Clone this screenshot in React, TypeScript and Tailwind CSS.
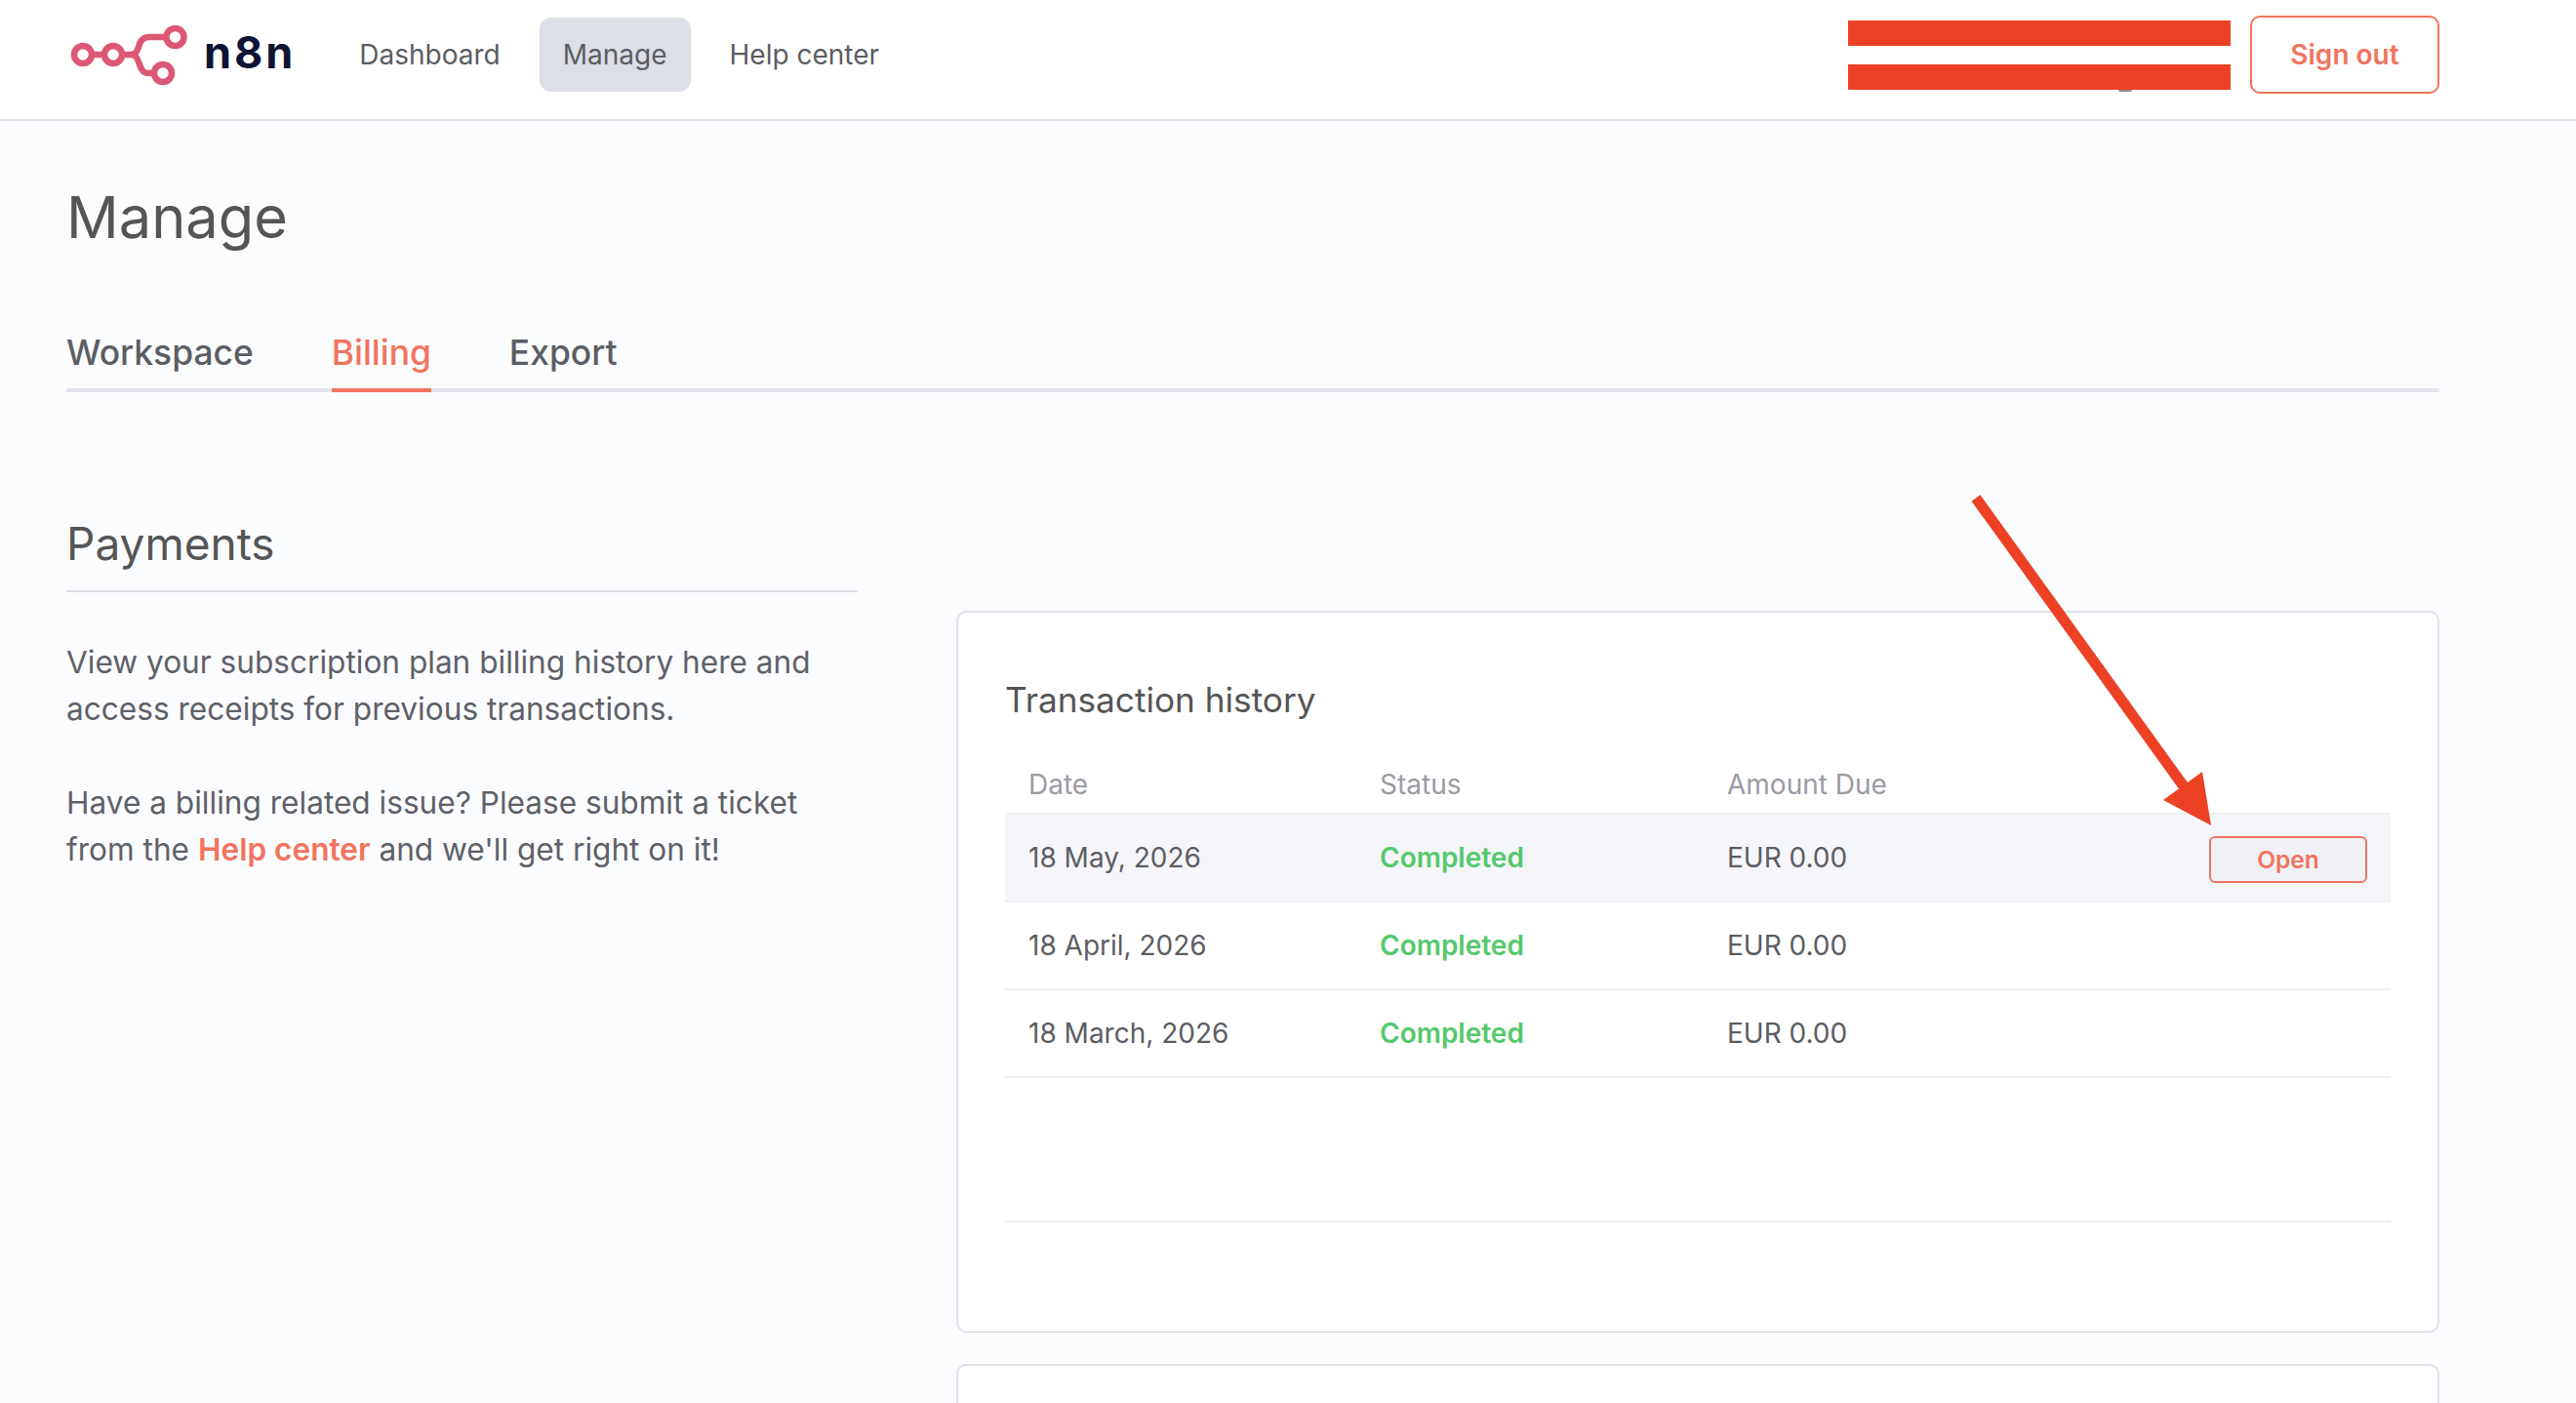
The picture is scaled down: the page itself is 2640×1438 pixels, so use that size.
import React from "react";

const rows = [
  { date: "18 May, 2026", amount: "EUR 0.00", open: true },
  { date: "18 April, 2026", amount: "EUR 0.00", open: false },
  { date: "18 March, 2026", amount: "EUR 0.00", open: false },
];

const Logo = () => (
  <svg width="126" height="70" viewBox="18 10 126 70" fill="none" stroke="#dc5874" strokeWidth="6.5">
    <circle cx="35" cy="45" r="9" />
    <circle cx="66" cy="45" r="9" />
    <circle cx="129.5" cy="27" r="9" />
    <circle cx="117" cy="64" r="9" />
    <path d="M44 45H57" />
    <path d="M75 45H84C90 45 91 40 93 34C95 29 98 27 103 27H120" />
    <path d="M84 45C90 45 91 50 93 55C95 62 98 64 103 64H108" />
  </svg>
);

const Arrow = () => (
  <svg className="absolute left-0 top-0 pointer-events-none" width="2640" height="1438" fill="none">
    <path d="M2025 510.5L2238 806" stroke="#ec4125" strokeWidth="11" />
    <polygon points="2266,846 2257,791 2217,820" fill="#ec4125" />
  </svg>
);

const App = () => {
  return (
    <div className="relative h-[1438px] w-full overflow-hidden bg-[#fbfcfe] font-['Inter','Liberation_Sans',sans-serif] text-[#5c5d63]">
      <header className="flex h-[124px] items-center border-b-2 border-[#e1e1e9] bg-white pb-[10px] pl-[68px] pr-[140px]">
        <Logo />
        <span className="-mt-[5px] ml-[15px] text-[45px] font-bold leading-none tracking-[3px] text-[#0e1433]">n8n</span>
        <nav className="ml-[41px] flex items-center gap-4 text-[28px]">
          <a className="px-[24px] py-[22px] leading-[32px]">Dashboard</a>
          <a className="rounded-[12px] bg-[#dcdfe6] px-[24px] py-[22px] leading-[32px]">Manage</a>
          <a className="px-[24px] py-[22px] leading-[32px]">Help center</a>
        </nav>
        <div className="relative ml-auto flex w-[392px] flex-col gap-[19px]">
          <div className="h-[26px] bg-[#ec4125]" />
          <div className="h-[26px] bg-[#ec4125]" />
          <span className="absolute bottom-[-2px] left-[277px] h-[2px] w-[14px] rounded-b-full bg-[#8b8b8b]" />
        </div>
        <button className="ml-5 h-[80px] w-[194px] rounded-[10px] border-2 border-[#f1745f] bg-white text-[28px] font-semibold text-[#f1745f]">
          Sign out
        </button>
      </header>

      <main className="mr-[140px] pl-[68px]">
        <h1 className="pt-[62px] text-[59.5px] leading-[72px] text-[#555555]">Manage</h1>

        <div className="mt-[84px] flex gap-[80px] border-b-4 border-[#e3e4ec] text-[35.4px] font-medium leading-[40px]">
          <a className="pb-[16px]">Workspace</a>
          <a className="-mb-1 border-b-4 border-[#f1745f] pb-[16px] text-[#f1745f]">Billing</a>
          <a className="pb-[16px]">Export</a>
        </div>

        <div className="mt-[129px] flex items-start gap-[101px]">
          <section className="w-[811px] shrink-0">
            <h2 className="border-b-2 border-[#dfe0e8] pb-[22px] text-[46px] leading-[52px] text-[#555555]">Payments</h2>
            <p className="mt-[48px] text-[31.6px] leading-[48px] text-[#5f6168]">
              View your subscription plan billing history here and
              <br />
              access receipts for previous transactions.
              <br />
              <br />
              Have a billing related issue? Please submit a ticket
              <br />
              from the <a className="font-semibold text-[#f1745f]">Help center</a> and we'll get right on it!
            </p>
          </section>

          <section className="mt-[95px] min-w-0 flex-1">
            <div className="h-[740px] rounded-[10px] border-2 border-[#dfe0e8] bg-white px-[48px] pt-[67px]">
              <h3 className="text-[35.2px] leading-[44px] text-[#555555]">Transaction history</h3>
              <div className="mt-[49px] grid grid-cols-[360px_356px_1fr] px-6 pb-[13px] text-[28px] leading-[32px] text-[#9a9ba3]">
                <span>Date</span>
                <span>Status</span>
                <span>Amount Due</span>
              </div>
              <div className="border-t-2 border-[#eef0f5]">
                {rows.map((row) => (
                  <div
                    key={row.date}
                    className={`grid h-[90px] grid-cols-[360px_356px_1fr_auto] items-center border-b-2 border-[#eef0f5] pl-6 pr-6 text-[28px] ${
                      row.open ? "bg-[#f5f6fa]" : ""
                    }`}
                  >
                    <span>{row.date}</span>
                    <span className="font-semibold text-[#55c96c]">Completed</span>
                    <span>{row.amount}</span>
                    {row.open ? (
                      <button className="mt-[4px] h-[48px] w-[162px] rounded-[6px] border-2 border-[#f1745f] bg-[#f0f1f5] text-[24.5px] font-semibold text-[#f1745f]">
                        Open
                      </button>
                    ) : null}
                  </div>
                ))}
                <div className="h-[148px] border-b-2 border-[#eef0f5]" />
              </div>
            </div>
            <div className="mt-[32px] h-[200px] rounded-t-[10px] border-2 border-b-0 border-[#dfe0e8] bg-white" />
          </section>
        </div>
      </main>
      <Arrow />
    </div>
  );
};

export default App;
